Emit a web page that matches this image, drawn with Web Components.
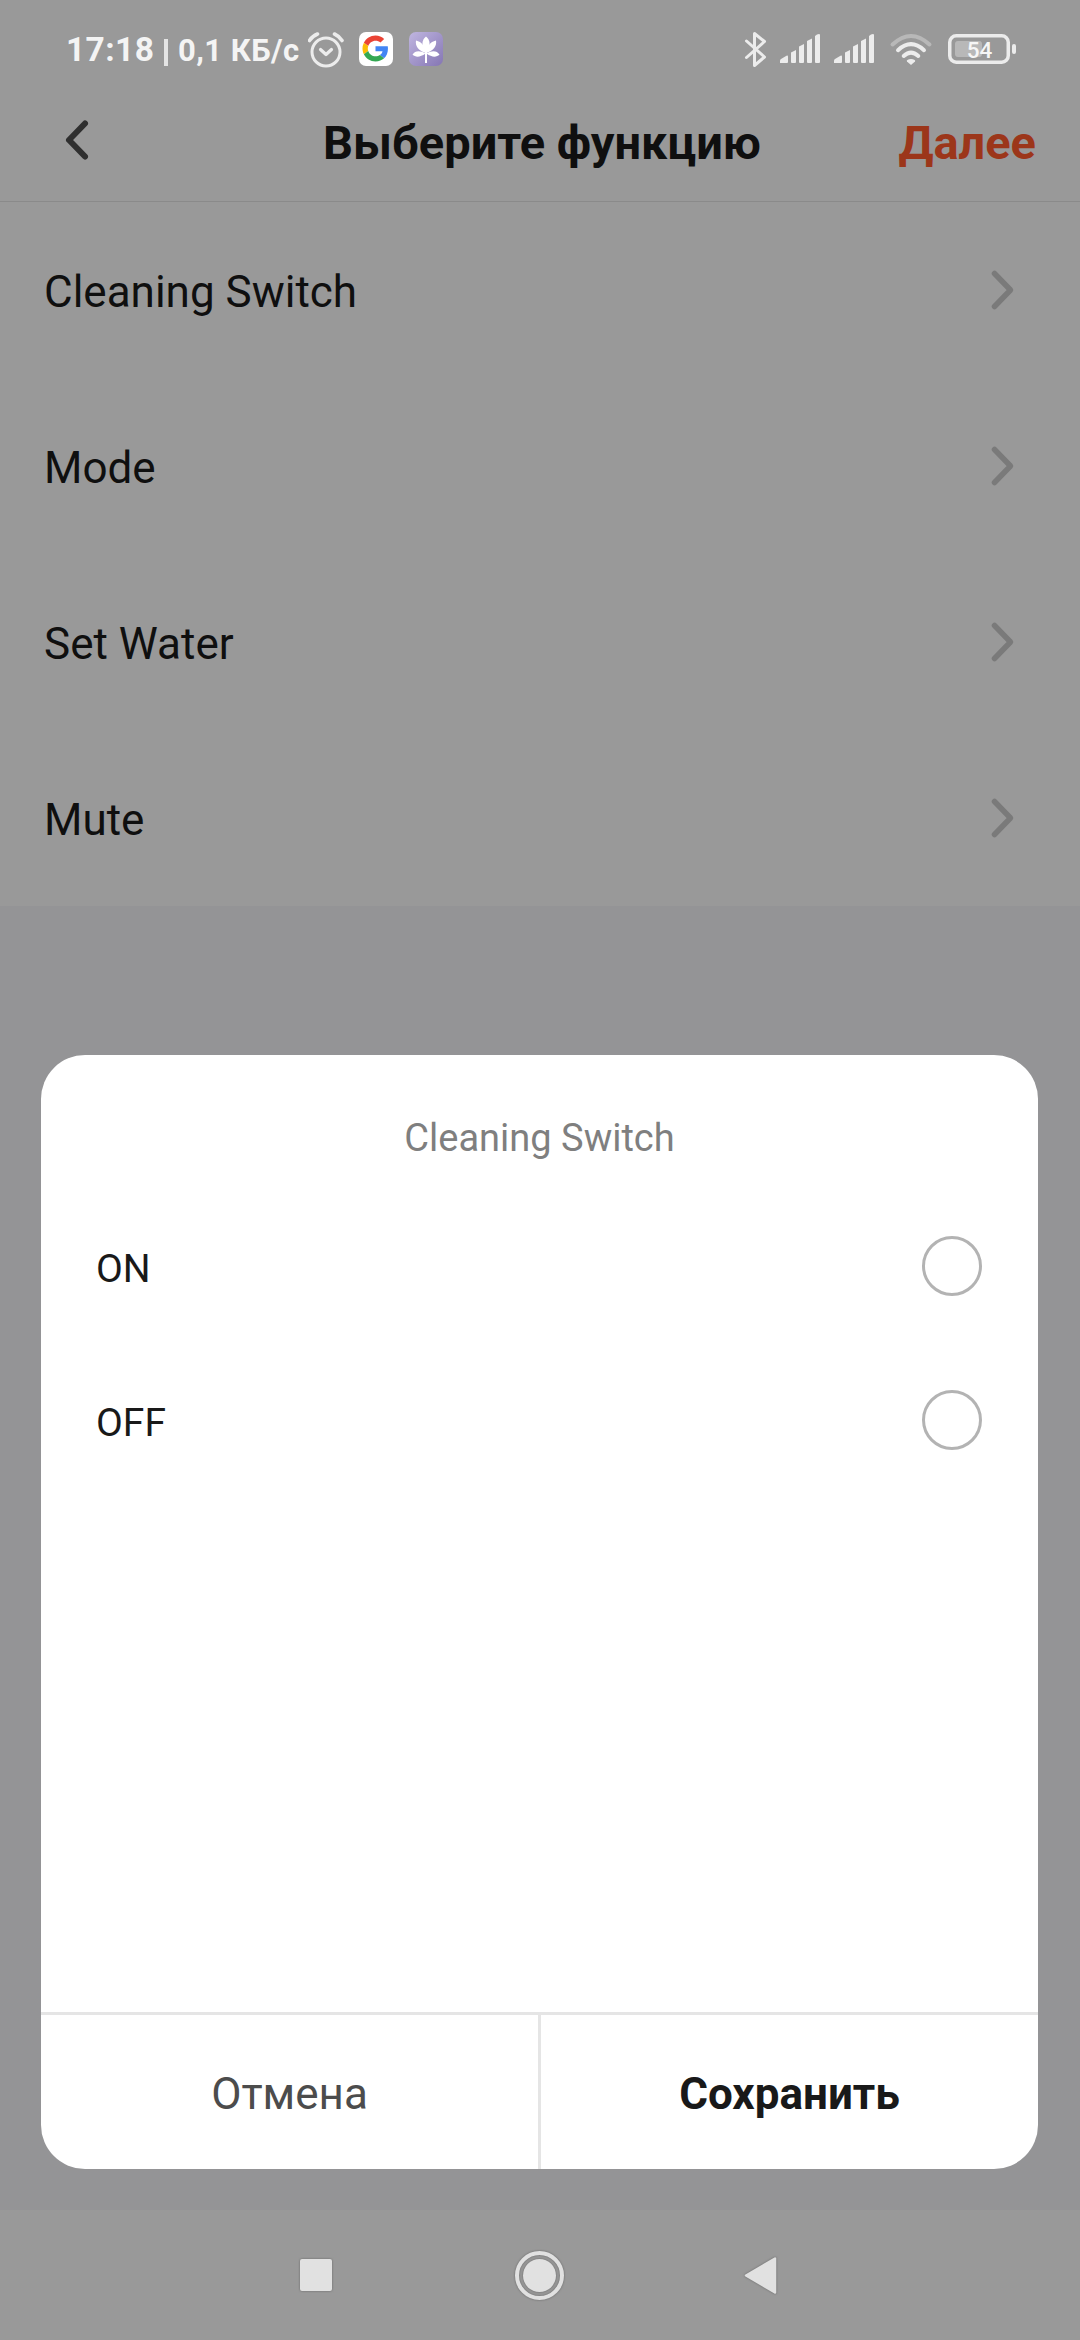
<!DOCTYPE html>
<html lang="ru">
<head>
<meta charset="utf-8">
<title>Выберите функцию</title>
<style>
html,body{margin:0;height:100%}
body{font-family:Roboto,"Liberation Sans",sans-serif;background:#949496;color:#0f0f0f}
</style>
</head>
<body>
<app-screen>
  <status-bar slot="status"></status-bar>
  <title-bar slot="header" action="Далее">Выберите функцию</title-bar>
  <function-row>Cleaning Switch</function-row>
  <function-row>Mode</function-row>
  <function-row>Set Water</function-row>
  <function-row>Mute</function-row>
  <option-sheet slot="sheet" heading="Cleaning Switch" cancel="Отмена" confirm="Сохранить">
    <radio-option>ON</radio-option>
    <radio-option>OFF</radio-option>
  </option-sheet>
  <nav-bar slot="nav"></nav-bar>
</app-screen>
<script>
function define(name, html) {
  const tpl = document.createElement('template');
  tpl.innerHTML = html;
  customElements.define(name, class extends HTMLElement {
    constructor() {
      super();
      this.attachShadow({mode: 'open'}).appendChild(tpl.content.cloneNode(true));
    }
    connectedCallback() {
      this.shadowRoot.querySelectorAll('[data-text]').forEach(el => {
        el.textContent = this.getAttribute(el.dataset.text) || '';
      });
    }
  });
}

define('app-screen', `
<style>
:host{display:flex;flex-direction:column;width:1080px;height:2340px;overflow:hidden;background:#949496}
.list{display:flex;flex-direction:column;background:#999}
.stage{flex:1;display:flex;flex-direction:column;justify-content:flex-end;padding:0 42px 41px 41px}
</style>
<slot name="status"></slot>
<slot name="header"></slot>
<div class="list"><slot></slot></div>
<div class="stage"><slot name="sheet"></slot></div>
<slot name="nav"></slot>`);

define('status-bar', `
<style>
:host{display:flex;justify-content:space-between;box-sizing:border-box;height:84px;padding:0 64px 0 66px;background:#999;color:#f4f4f4;font-weight:700;white-space:pre}
.left,.right{display:flex;height:84px}
.clock{width:98px;font-size:33.5px;line-height:100px;letter-spacing:.4px}
.bar{width:4px;height:27px;margin:39px 10px 0 0;background:#e4e4e4}
.speed{width:130px;font-size:31px;line-height:101px;letter-spacing:.45px}
svg{display:block;flex:none}
</style>
<div class="left">
  <span class="clock">17:18</span><span class="bar"></span><span class="speed">0,1 КБ/с</span>
  <svg width="140" height="84" viewBox="308 0 140 84">
    <g fill="none" stroke="#ececec" stroke-width="3" stroke-linecap="round" stroke-linejoin="round">
      <circle cx="326" cy="52" r="14"/>
      <path d="M320.5 49.5l5.500 5 5.500-5" stroke-width="3.200"/>
      <path d="M309.500 40.500q3-4.500 8-6.500M334.500 34q4.500 2 7.500 6.500" stroke-width="3.600"/>
    </g>
    <rect x="359" y="32" width="34" height="34" rx="7" fill="#fff"/>
    <g transform="translate(362.500 35.500) scale(.5417)">
      <path fill="#ea4335" d="M24 9.500c3.540 0 6.710 1.220 9.210 3.600l6.850-6.850C35.900 2.380 30.470 0 24 0 14.620 0 6.510 5.380 2.560 13.220l7.980 6.190C12.430 13.720 17.740 9.500 24 9.500z"/>
      <path fill="#4285f4" d="M46.980 24.550c0-1.570-.15-3.090-.38-4.550H24v9.020h12.940c-.58 2.960-2.260 5.480-4.780 7.180l7.730 6c4.510-4.180 7.090-10.360 7.090-17.650z"/>
      <path fill="#fbbc05" d="M10.530 28.590A14.500 14.500 0 0 1 9.770 24c0-1.600.27-3.140.76-4.590l-7.980-6.190A23.900 23.900 0 0 0 0 24c0 3.880.92 7.540 2.560 10.780z"/>
      <path fill="#34a853" d="M24 48c6.480 0 11.930-2.130 15.890-5.810l-7.730-6c-2.150 1.450-4.920 2.300-8.160 2.300-6.260 0-11.570-4.220-13.470-9.910l-7.980 6.190C6.510 42.620 14.620 48 24 48z"/>
    </g>
    <defs><linearGradient id="lf" x1="0" y1="0" x2="1" y2="1"><stop offset="0" stop-color="#c0b6e0"/><stop offset="1" stop-color="#8576b4"/></linearGradient></defs>
    <rect x="409" y="32" width="34" height="34" rx="7" fill="url(#lf)"/>
    <g fill="#fff">
      <path d="M426 52.500C421 46 421.500 40 426 36.500 430.500 40 431 46 426 52.500z"/>
      <path d="M425.500 53C418.500 50.500 415 46 416 40.500 422 42 425 46 425.500 53zM426.500 53C433.500 50.500 437 46 436 40.500 430 42 427 46 426.500 53z"/>
      <path d="M425.500 53.500C420 57.500 415.500 57.500 412.500 54.500 415 50.500 420 50 425.500 53.500zM426.500 53.500C432 57.500 436.500 57.500 439.500 54.500 437 50.500 432 50 426.500 53.500z"/>
      <rect x="425" y="50" width="2" height="13"/>
    </g>
  </svg>
</div>
<div class="right">
  <svg width="272" height="84" viewBox="744 0 272 84" fill="#ececec">
    <path d="M746.500 41l18 16-10 8.500V33.500l10 8-18 16" fill="none" stroke="#ececec" stroke-width="3" stroke-linejoin="round" stroke-linecap="round"/>
    <g id="sig">
      <path d="M780 63v-2.500q0-1 1-1.600l5.500-3.200q1.500-.7 1.500 1V62q0 1-1 1z"/>
      <path d="M791 52.500l5-2.500V62q0 1-1 1h-3q-1 0-1-1z"/>
      <path d="M799 46.500l5-2.500V62q0 1-1 1h-3q-1 0-1-1z"/>
      <path d="M807 41l5-2.500V62q0 1-1 1h-3q-1 0-1-1z"/>
      <path d="M815 36q2-2 4-2 1 0 1 1V62q0 1-1 1h-3q-1 0-1-1z"/>
    </g>
    <use href="#sig" x="54"/>
    <g fill="none" stroke="#ececec" stroke-width="4" stroke-linecap="round">
      <path d="M892.500 44.500Q911 27.500 929.500 44.500" stroke="#b8b8b8"/>
      <path d="M898 50.200Q911 38.200 924 50.200"/>
      <path d="M903.700 56Q911 49.400 918.300 56"/>
    </g>
    <path d="M911 65l-4-3.600q-.6-.8.300-1.400 3.700-2 7.400 0 .9.600.3 1.400z"/>
    <rect x="955" y="41" width="27" height="16" rx="3" fill="#b8b8b8"/>
    <rect x="949.750" y="35.750" width="58.500" height="26.500" rx="6.500" fill="none" stroke="#ececec" stroke-width="3.500"/>
    <rect x="1012" y="44" width="4" height="10" rx="2"/>
    <text x="979.500" y="58" text-anchor="middle" font-family="Roboto,sans-serif" font-size="22.500" font-weight="500" fill="#f6f6f6">54</text>
  </svg>
</div>`);

define('title-bar', `
<style>
:host{display:grid;grid-template-columns:200px 1fr 200px;align-items:center;box-sizing:border-box;height:118px;padding:0 44px 0 48px;background:#999;border-bottom:1px solid #8a8a8a;font-weight:700;font-size:47px;white-space:nowrap}
svg{display:block;margin:-5px 0 0 16px}
.title{text-align:center}
.title,.action{line-height:56px}
.action{color:#9c361a;text-align:right}
</style>
<svg width="28" height="42" viewBox="0 0 28 42"><path d="M21 4.500L5 21l16 16.500" fill="none" stroke="#2f2f2f" stroke-width="6" stroke-linecap="round" stroke-linejoin="round"/></svg>
<div class="title"><slot></slot></div>
<div class="action" data-text="action"></div>`);

define('function-row', `
<style>
:host{display:flex;align-items:center;justify-content:space-between;box-sizing:border-box;height:176px;padding:0 64px 0 44px;font-size:44px;line-height:52px}
span{padding-top:4px}
svg{display:block}
</style>
<span><slot></slot></span>
<svg width="26" height="42" viewBox="0 0 26 42"><path d="M4.500 4.500L20.500 21 4.500 37.500" fill="none" stroke="#7a7a7a" stroke-width="5.500" stroke-linecap="round" stroke-linejoin="round"/></svg>`);

define('option-sheet', `
<style>
:host{display:flex;flex-direction:column;height:1114px;border-radius:44px;background:#fff;overflow:hidden}
.heading{height:134px;line-height:166px;text-align:center;font-size:38px;color:#7f7f7f}
.options{flex:1}
.buttons{display:flex;height:154px;border-top:3px solid #e5e5e5;font-size:44px;line-height:158px;text-align:center}
.cancel{width:497px;border-right:3px solid #e5e5e5;color:#4c4c4c}
.confirm{flex:1;font-weight:700;color:#191919}
</style>
<div class="heading" data-text="heading"></div>
<div class="options"><slot></slot></div>
<div class="buttons"><div class="cancel" data-text="cancel"></div><div class="confirm" data-text="confirm"></div></div>`);

define('radio-option', `
<style>
:host{display:flex;align-items:center;justify-content:space-between;height:154px;padding:0 56px 0 55px;font-size:39px;line-height:46px;color:#191919}
span{padding-top:6px}
i{box-sizing:border-box;width:60px;height:60px;border:3px solid #b3b3b3;border-radius:50%}
</style>
<span><slot></slot></span><i></i>`);

define('nav-bar', `
<style>
:host{display:flex;justify-content:center;height:130px;background:#999}
svg{display:block;flex:none;filter:drop-shadow(0 0 1px #666)}
</style>
<svg width="1080" height="130" viewBox="0 2210 1080 130" fill="#e1e1e1">
  <rect x="300" y="2259" width="32" height="32" rx="2"/>
  <circle cx="539.500" cy="2275.500" r="22.500" fill="none" stroke="#e1e1e1" stroke-width="4"/>
  <circle cx="539.500" cy="2275.500" r="16.500"/>
  <path d="M746 2275.500L775 2258.500V2292.500z" stroke="#e1e1e1" stroke-width="2.500" stroke-linejoin="round"/>
</svg>`);
</script>
</body>
</html>
